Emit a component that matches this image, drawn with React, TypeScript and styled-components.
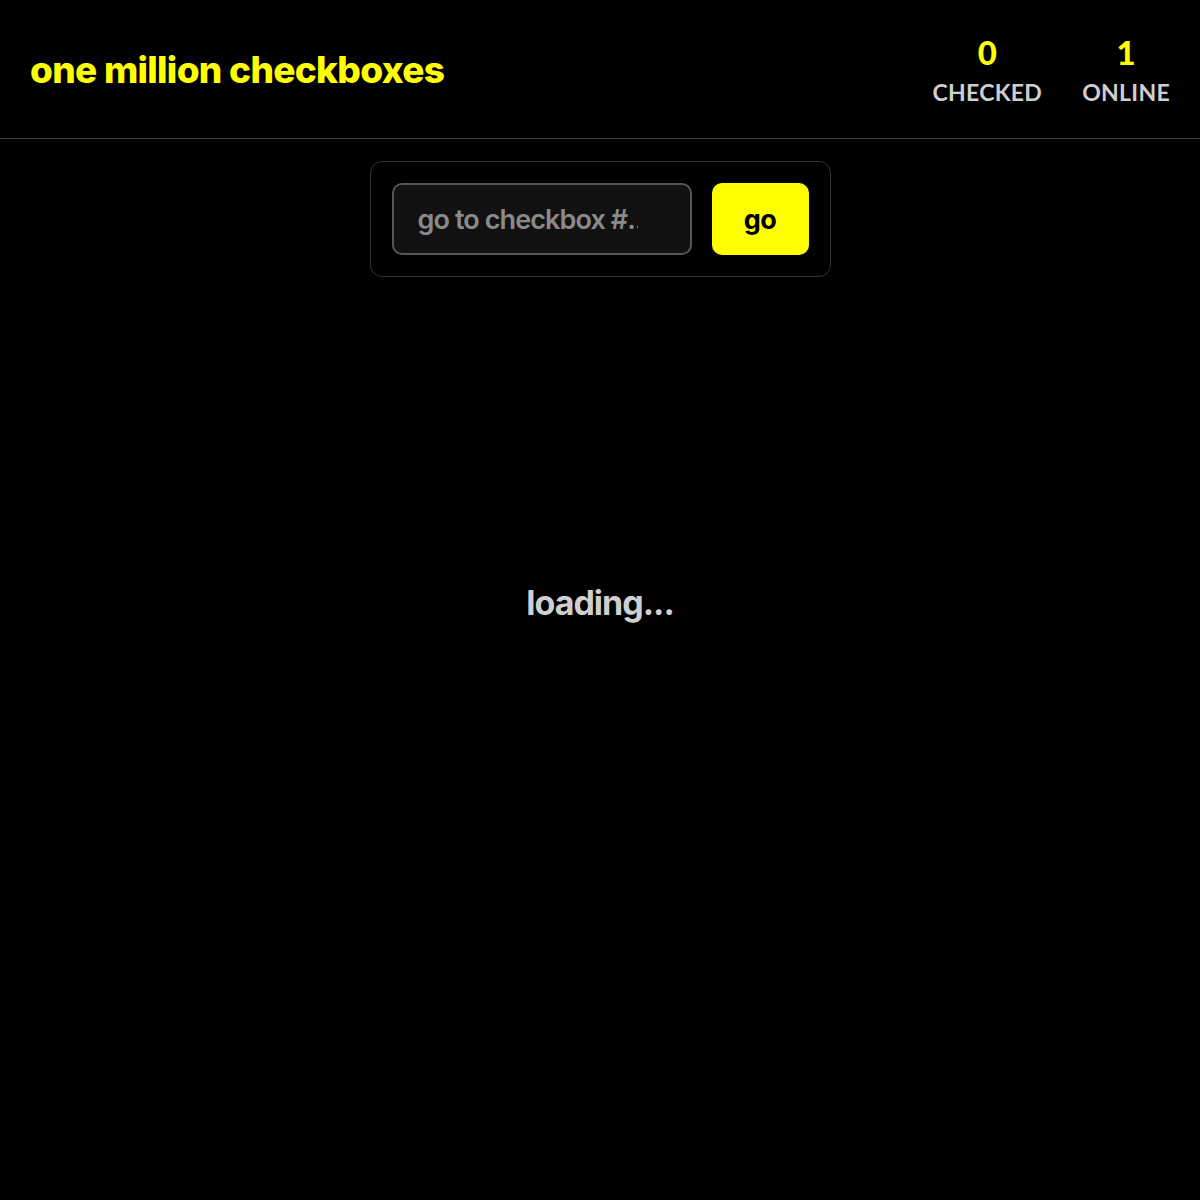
import React from "react";
import styled, { createGlobalStyle } from "styled-components";

const Global = createGlobalStyle`
  html, body { margin: 0; padding: 0; background: #000; }
  body { font-family: "Inter", "Noto Sans", sans-serif; color: #ccc; }
  * { box-sizing: border-box; }
`;

const Page = styled.div`
  min-height: 1200px;
  background: #000;
  display: flex;
  flex-direction: column;
`;

const Header = styled.header`
  height: 139px;
  display: flex;
  align-items: center;
  justify-content: space-between;
  padding: 0 30px 0 30px;
  border-bottom: 1px solid #404040;
`;

const Title = styled.h1`
  margin: 0;
  font-size: 37px;
  font-weight: 800;
  letter-spacing: -0.7px;
  color: #ffff00;
  line-height: 1;
`;

const Stats = styled.div`
  display: flex;
  gap: 40px;
  align-items: center;
  margin-top: 2px;
`;

const Stat = styled.div`
  display: flex;
  flex-direction: column;
  align-items: center;
  gap: 12px;
`;

const StatValue = styled.div`
  font-family: "Lato", sans-serif;
  font-size: 33px;
  font-weight: 900;
  color: #ffff00;
  line-height: 1;
`;

const StatLabel = styled.div`
  font-family: "Lato", sans-serif;
  font-size: 23px;
  font-weight: 700;
  color: #cfcfcf;
  line-height: 1;
  letter-spacing: 0.3px;
`;

const Main = styled.main`
  display: flex;
  flex-direction: column;
  align-items: center;
  padding-top: 22px;
`;

const Form = styled.form`
  display: flex;
  gap: 20px;
  padding: 21px;
  border: 1px solid #333;
  border-radius: 12px;
  width: 461px;
`;

const Input = styled.input`
  width: 300px;
  height: 72px;
  background: #111;
  border: 2px solid #555;
  border-radius: 10px;
  padding: 0 52px 0 24px;
  font-family: "Inter", sans-serif;
  font-size: 27px;
  font-weight: 600;
  letter-spacing: -0.9px;
  color: #ddd;
  outline: none;
  &::placeholder { color: #8a8a8a; }
`;

const GoButton = styled.button`
  width: 98px;
  height: 72px;
  background: #ffff00;
  border: none;
  border-radius: 10px;
  font-family: "Inter", sans-serif;
  font-size: 27px;
  font-weight: 700;
  letter-spacing: -0.5px;
  color: #000;
  cursor: pointer;
`;

const Loading = styled.div`
  margin-top: 305px;
  font-size: 34px;
  font-weight: 700;
  letter-spacing: -1px;
  color: #cfcfcf;
`;

export default function App() {
  return (
    <Page>
      <Global />
      <Header>
        <Title>one million checkboxes</Title>
        <Stats>
          <Stat>
            <StatValue>0</StatValue>
            <StatLabel>CHECKED</StatLabel>
          </Stat>
          <Stat>
            <StatValue>1</StatValue>
            <StatLabel>ONLINE</StatLabel>
          </Stat>
        </Stats>
      </Header>
      <Main>
        <Form onSubmit={(e) => e.preventDefault()}>
          <Input placeholder="go to checkbox #..." />
          <GoButton type="submit">go</GoButton>
        </Form>
        <Loading>loading...</Loading>
      </Main>
    </Page>
  );
}
